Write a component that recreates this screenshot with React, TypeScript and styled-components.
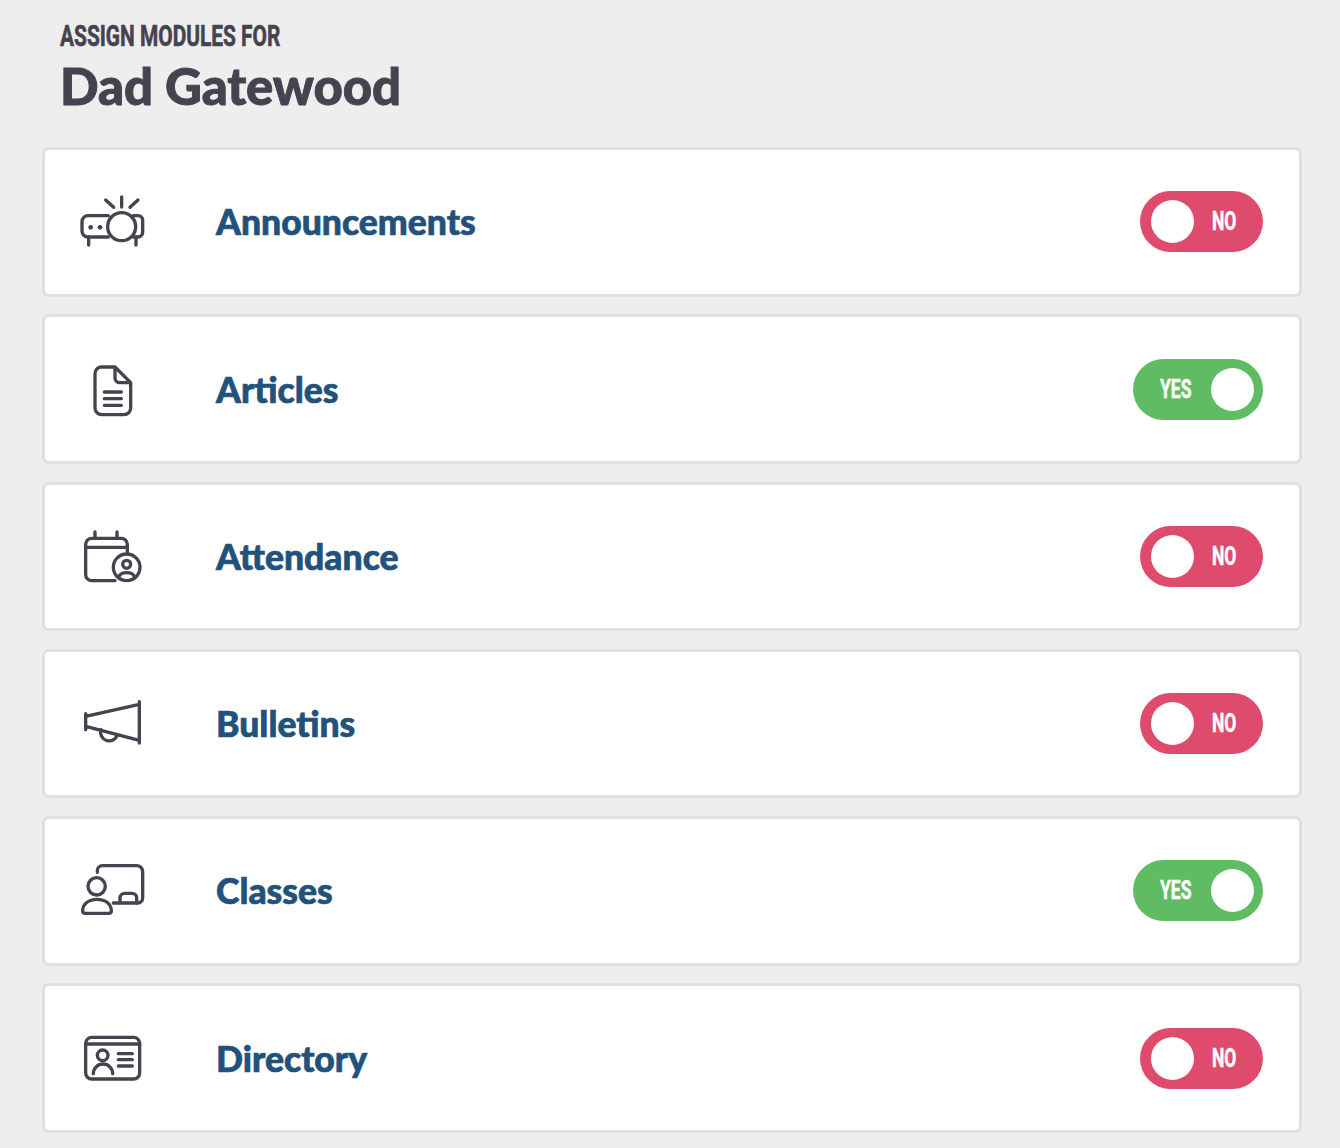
import React from 'react';
import styled, { createGlobalStyle } from 'styled-components';

const GlobalStyle = createGlobalStyle`
  html, body {
    margin: 0;
    padding: 0;
    background: #eeeeee;
  }
`;

const Page = styled.div`
  display: flex;
  flex-direction: column;
  box-sizing: border-box;
  height: 1148px;
  overflow: hidden;
  padding: 17px 38px 0 42px;
  background: #eeeeee;
  color: #45434f;
`;

const Header = styled.header`
  display: flex;
  flex-direction: column;
  height: 130px;
  padding-left: 18px;
`;

const Eyebrow = styled.div`
  font-family: 'Roboto', sans-serif;
  font-weight: 700;
  font-size: 29px;
  line-height: 38px;
  white-space: nowrap;
  -webkit-text-stroke: 0.6px #45434f;
  transform: scaleX(0.72);
  transform-origin: left center;
`;

const Name = styled.h1`
  margin: 0;
  font-family: 'Lato', sans-serif;
  font-weight: 900;
  font-size: 50.9px;
  line-height: 62px;
  letter-spacing: -0.1px;
  -webkit-text-stroke: 0.9px #45434f;
`;

const List = styled.div`
  display: flex;
  flex-direction: column;
  gap: 17.75px;
`;

const Card = styled.div`
  display: flex;
  align-items: center;
  box-sizing: border-box;
  height: 149.5px;
  padding: 0 36px 0 25px;
  background: #ffffff;
  border: 3px solid #e0e0e0;
  border-radius: 7px;
`;

const IconSvg = styled.svg`
  flex: none;
  width: 90px;
  height: 75px;
  margin-top: 2px;
  fill: none;
  stroke: #45434f;
  stroke-width: 10;
  stroke-linecap: round;
  stroke-linejoin: round;
`;

const Dot = styled.circle`
  fill: #45434f;
  stroke: none;
`;

const ModuleName = styled.div`
  flex: 1;
  margin-left: 56px;
  font-family: 'Lato', sans-serif;
  font-weight: 900;
  font-size: 35.5px;
  color: #22527c;
  -webkit-text-stroke: 0.7px #22527c;
`;

const Toggle = styled.div<{ $on: boolean }>`
  display: flex;
  flex-direction: ${p => (p.$on ? 'row' : 'row-reverse')};
  align-items: center;
  justify-content: space-between;
  box-sizing: border-box;
  width: ${p => (p.$on ? 130 : 123)}px;
  height: 61px;
  padding: ${p => (p.$on ? '0 9px 0 27px' : '0 28px 0 11px')};
  border-radius: 31px;
  background: ${p => (p.$on ? '#5fbc63' : '#de4b6c')};
`;

const ToggleLabel = styled.span<{ $on: boolean }>`
  display: block;
  width: ${p => (p.$on ? 31 : 23)}px;
  padding-top: 1px;
  font-family: 'Roboto', sans-serif;
  font-weight: 700;
  font-size: 25px;
  line-height: 30px;
  color: #ffffff;
  -webkit-text-stroke: 0.5px #ffffff;
  transform: scaleX(0.7);
  transform-origin: left center;
`;

const Knob = styled.span`
  flex: none;
  width: 43px;
  height: 43px;
  border-radius: 50%;
  background: #ffffff;
`;

const ProjectorIcon = () => (
  <IconSvg viewBox="0 0 270 225">
    <path d="M115 92H54a18 18 0 0 0-18 18v28a18 18 0 0 0 18 18h61" />
    <path d="M190 92h14a14 14 0 0 1 14 14v36a14 14 0 0 1-14 14h-14" />
    <circle cx="155" cy="125" r="42" />
    <path d="M56 156v24M198 156v24M155 36v30M107 45l24 22M204 45l-24 22" />
    <Dot cx="62" cy="127" r="7" />
    <Dot cx="90" cy="127" r="7" />
  </IconSvg>
);

const DocumentIcon = () => (
  <IconSvg viewBox="0 3 270 225">
    <path d="M135 45H95a20 20 0 0 0-20 20v103a20 20 0 0 0 20 20h67a20 20 0 0 0 20-20V92zV78a14 14 0 0 0 14 14h33" />
    <path d="M103 120h51M103 140h51M103 160h51" />
  </IconSvg>
);

const CalendarUserIcon = () => (
  <IconSvg viewBox="0 0 270 225">
    <path d="M135 182H65a18 18 0 0 1-18-18V73a18 18 0 0 1 18-18h89a18 18 0 0 1 18 18v25" />
    <path d="M47 82h125M75 36v19M141 36v19" />
    <circle cx="170" cy="142" r="40" />
    <circle cx="170" cy="133" r="12" />
    <path d="M146 172q4-14 24-14t24 14" />
  </IconSvg>
);

const MegaphoneIcon = () => (
  <IconSvg viewBox="0 0 270 225">
    <path d="M47 80v48M208 44v124M47 88l161-36M47 118l161 42" />
    <path d="M93 128a25 25 0 0 0 49 16" />
  </IconSvg>
);

const ClassroomIcon = () => (
  <IconSvg viewBox="0 0 270 225">
    <path d="M82 55v-5a15 15 0 0 1 15-15h103a18 18 0 0 1 18 18v79a15 15 0 0 1-15 15h-73" />
    <path d="M150 147v-15a14 14 0 0 1 14-14h22a14 14 0 0 1 14 14v15" />
    <circle cx="80" cy="97" r="26" />
    <path d="M38 170c0-20 18-34 43-34s43 14 43 34c0 5-3 8-8 8H46c-5 0-8-3-8-8z" />
  </IconSvg>
);

const IdCardIcon = () => (
  <IconSvg viewBox="0 0 270 225">
    <rect x="47" y="46" width="162" height="125" rx="18" />
    <path d="M47 66h162M145 95h42M145 113h42M145 132h42" />
    <circle cx="98" cy="100" r="16" />
    <path d="M70 155a28 28 0 0 1 58 0" />
  </IconSvg>
);

const modules = [
  { name: 'Announcements', icon: <ProjectorIcon />, on: false },
  { name: 'Articles', icon: <DocumentIcon />, on: true },
  { name: 'Attendance', icon: <CalendarUserIcon />, on: false },
  { name: 'Bulletins', icon: <MegaphoneIcon />, on: false },
  { name: 'Classes', icon: <ClassroomIcon />, on: true },
  { name: 'Directory', icon: <IdCardIcon />, on: false },
];

const App: React.FC = () => (
  <Page>
    <GlobalStyle />
    <Header>
      <Eyebrow>ASSIGN MODULES FOR</Eyebrow>
      <Name>Dad Gatewood</Name>
    </Header>
    <List>
      {modules.map(m => (
        <Card key={m.name}>
          {m.icon}
          <ModuleName>{m.name}</ModuleName>
          <Toggle $on={m.on}>
            <ToggleLabel $on={m.on}>{m.on ? 'YES' : 'NO'}</ToggleLabel>
            <Knob />
          </Toggle>
        </Card>
      ))}
    </List>
  </Page>
);

export default App;
